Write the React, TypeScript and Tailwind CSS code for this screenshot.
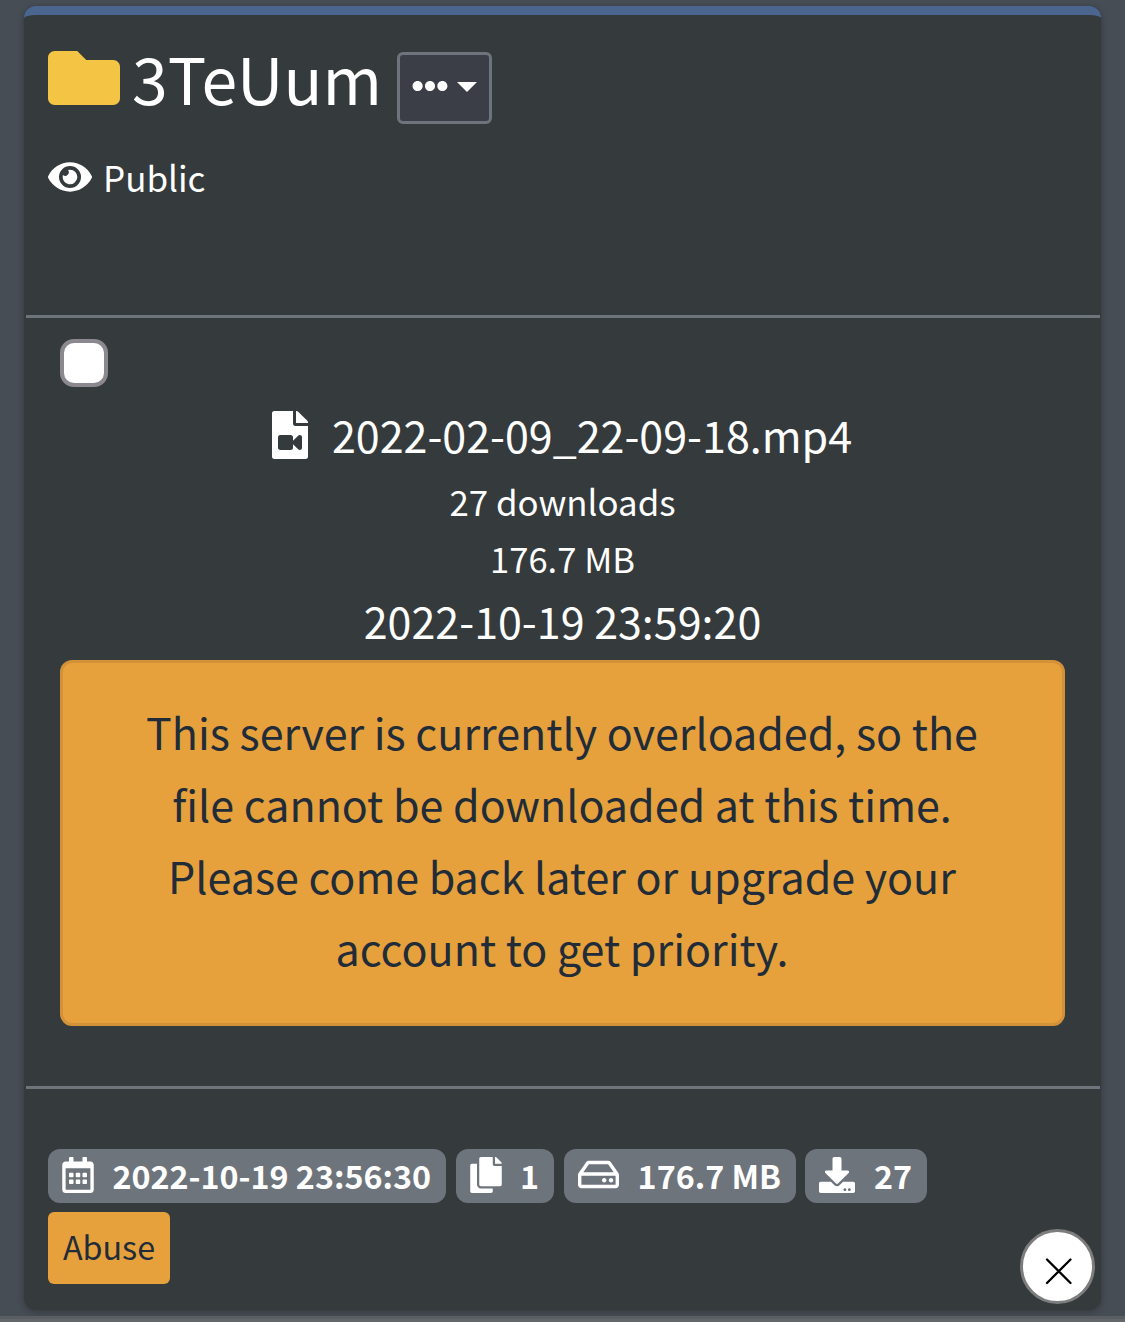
import type { ReactNode } from 'react';
import {
  FaCopy,
  FaDownload,
  FaEllipsisH,
  FaEye,
  FaFileVideo,
  FaFolder,
  FaRegCalendarAlt,
  FaRegHdd,
} from 'react-icons/fa';

interface BadgeProps {
  icon: ReactNode;
  label: string;
  className: string;
}

const Badge: React.FC<BadgeProps> = ({ icon, label, className }) => (
  <span
    className={`flex h-[54px] items-center justify-between rounded-xl bg-[#6e747c] pr-[15px] pb-[3px] text-[32.25px] leading-[48px] font-bold ${className}`}
  >
    {icon}
    <span className="whitespace-nowrap">{label}</span>
  </span>
);

const App: React.FC = () => {
  return (
    <div className="relative flex h-[1322px] w-[1125px] flex-col overflow-hidden bg-[#474d55] pt-1.5 font-['Noto_Sans_CJK_SC',sans-serif] text-white">
      <main className="mx-6 flex h-[1304px] w-[1077px] shrink-0 flex-col rounded-xl border-t-[9px] border-[#4a668f] bg-[#353a3d] shadow-[0_0_3px_rgba(0,0,0,0.13),0_3px_9px_rgba(0,0,0,0.2)]">
        {/* Folder header */}
        <header className="mr-px ml-0.5 h-[303px] border-b-[3px] border-[#6e747c] pl-[22px]">
          <div className="flex h-[109px] items-start pt-[27px]">
            <FaFolder className="size-[72px] text-[#f4c444]" />
            <h1 className="ml-3 h-[70px] w-[265px] text-[64.3px] leading-[70px] font-normal whitespace-nowrap">3TeUum</h1>
            <button className="mt-2.5 flex h-[72px] w-[95px] items-start rounded-md border-[3px] border-[#6e747c] bg-[#3b3e47] pt-[13px] pl-3">
              <FaEllipsisH className="size-9" />
              <span className="mt-[14px] ml-[9px] border-x-[10px] border-t-[10px] border-x-transparent border-t-white" />
            </button>
          </div>
          <div className="mt-[24px] flex h-[58px] items-center text-[35px]">
            <FaEye className="size-11" />
            <span className="ml-[11px] pt-px">Public</span>
          </div>
        </header>

        {/* File entry */}
        <section className="mr-px ml-0.5 flex h-[771px] flex-col items-center border-b-[3px] border-[#6e747c] pt-[21px] pr-[35px] pl-[34px]">
          <div className="size-12 self-start rounded-[14px] border-4 border-[#8b898f] bg-white" />
          <div className="mt-[11px] flex h-[72px] items-center pr-[7px] text-[43px] leading-[72px]">
            <FaFileVideo className="mt-0.5 size-12" />
            <span className="ml-[18px] whitespace-nowrap">2022-02-09_22-09-18.mp4</span>
          </div>
          <div className="mt-[3px] h-[56px] text-[34.85px] leading-[57px]">27 downloads</div>
          <div className="h-[56px] text-[34.6px] leading-[58px]">176.7 MB</div>
          <div className="h-[75px] text-[43px] leading-[70px]">2022-10-19 23:59:20</div>
          <div className="h-[366px] w-full rounded-xl border-[3px] border-[#d39238] bg-[#e6a13c] pt-8 pr-px text-center text-[43px] leading-[72px] text-[#212c38]">
            <p>This server is currently overloaded, so the</p>
            <p>file cannot be downloaded at this time.</p>
            <p>Please come back later or upgrade your</p>
            <p>account to get priority.</p>
          </div>
        </section>

        {/* Totals */}
        <footer className="pt-[60px] pl-6">
          <div className="flex">
            <Badge
              icon={<FaRegCalendarAlt className="size-9" />}
              label="2022-10-19 23:56:30"
              className="w-[398px] pl-3"
            />
            <Badge icon={<FaCopy className="size-9" />} label="1" className="ml-2.5 w-[98px] pl-3" />
            <Badge icon={<FaRegHdd className="size-[41px]" />} label="176.7 MB" className="ml-2.5 w-[232px] pl-3.5" />
            <Badge icon={<FaDownload className="size-9" />} label="27" className="ml-[9px] w-[122px] pl-3.5" />
          </div>
          <button className="mt-[9px] flex h-[72px] w-[122px] items-center justify-center rounded-md bg-[#e6a13c] pb-1 text-[32.3px] text-[#212c38]">
            Abuse
          </button>
        </footer>
      </main>

      <div className="mt-1.5 h-1.5 shrink-0 border-t-[3px] border-[#585e62] bg-[#63676a]" />

      {/* Floating close button */}
      <button className="absolute top-[1229px] left-[1020px] size-[75px] rounded-full border-[3px] border-[#7d7d7d] bg-white">
        <svg viewBox="0 0 69 69" className="size-[69px]" stroke="black" strokeWidth="2.3" strokeLinecap="round">
          <path d="M24 27.5 47.5 51M47.5 27.5 24 51" />
        </svg>
      </button>
    </div>
  );
};

export default App;
